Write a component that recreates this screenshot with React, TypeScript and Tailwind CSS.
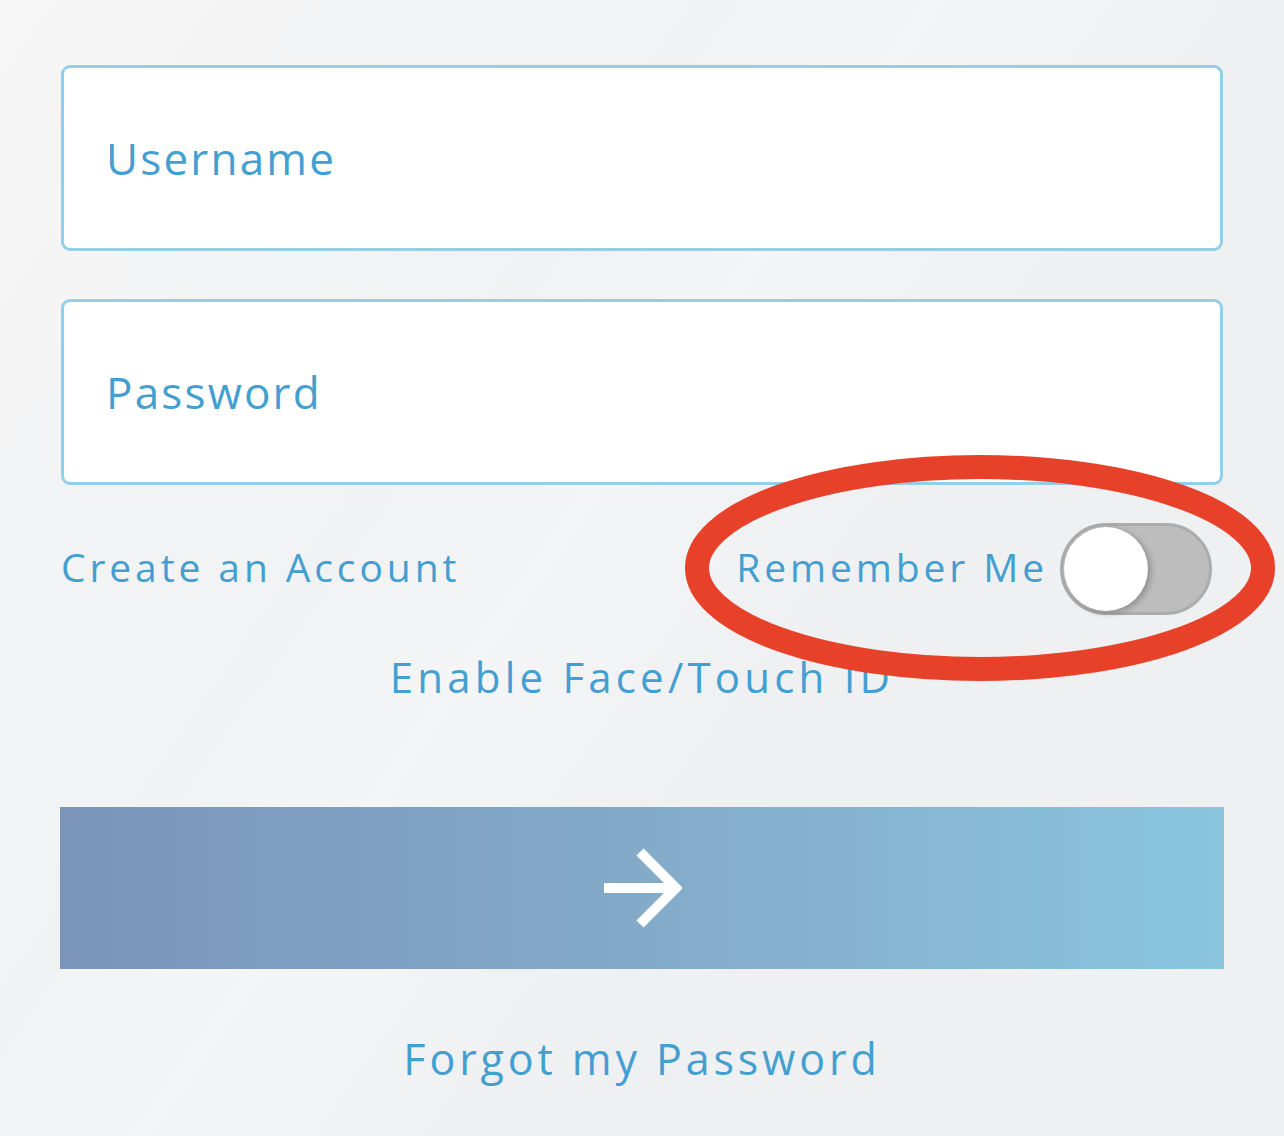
const font = { fontFamily: '"Open Sans", "Liberation Sans", sans-serif' }

const Field = ({ label }: { label: string }) => (
  <div className="flex h-[186px] items-center rounded-[9px] border-[3px] border-[#93cfe8] bg-white pl-[42px]">
    <span className="text-[44px] tracking-[0.05em] text-[#449fd1]">{label}</span>
  </div>
)

const Toggle = () => (
  <div className="relative h-[92px] w-[152px] rounded-full border-[3px] border-[#acacac] bg-[#bdbdbd]">
    <div className="absolute left-[1px] top-[1px] size-[84px] rounded-full bg-white shadow-[3px_2px_6px_rgba(0,0,0,0.25)]" />
  </div>
)

const Arrow = () => (
  <svg width="80" height="80" viewBox="0 0 80 80" fill="none">
    <path d="M2 40H74" stroke="white" strokeWidth="10" />
    <path d="M38 4L74 40L38 76" stroke="white" strokeWidth="10" />
  </svg>
)

export default function App() {
  return (
    <div
      className="relative h-[1136px] w-[1284px] overflow-hidden bg-[linear-gradient(125deg,#f6f6f7_0%,#f1f2f3_35%,#f4f5f6_45%,#eff0f2_60%,#eef0f2_100%)]"
      style={font}
    >
      <div className="flex flex-col px-[61px] pt-[65px]">
        <div className="flex flex-col gap-[48px]">
          <Field label="Username" />
          <Field label="Password" />
        </div>

        <div className="mt-[38px] flex h-[92px] items-center justify-between pr-[11px]">
          <span className="-mt-[4px] text-[39px] tracking-[0.1em] text-[#449fd1]">Create an Account</span>
          <div className="flex items-center gap-[12px]">
            <span className="-mt-[4px] text-[39px] tracking-[0.1em] text-[#449fd1]">Remember Me</span>
            <Toggle />
          </div>
        </div>

        <div className="mt-[30px] text-center text-[42px] tracking-[0.1em] text-[#449fd1]">
          Enable Face/Touch ID
        </div>

        <button className="mt-[99px] -mx-px flex h-[162px] items-center justify-center bg-[linear-gradient(90deg,#7b95ba_0%,#83aac9_50%,#8ac5de_100%)]">
          <Arrow />
        </button>

        <div className="mt-[58px] text-center text-[43px] tracking-[0.09em] text-[#449fd1]">
          Forgot my Password
        </div>
      </div>

      <svg className="pointer-events-none absolute left-[680px] top-[450px]" width="600" height="240" viewBox="0 0 600 240">
        <ellipse cx="300" cy="118" rx="283" ry="101" fill="none" stroke="#e8412a" strokeWidth="24" />
      </svg>
    </div>
  )
}
